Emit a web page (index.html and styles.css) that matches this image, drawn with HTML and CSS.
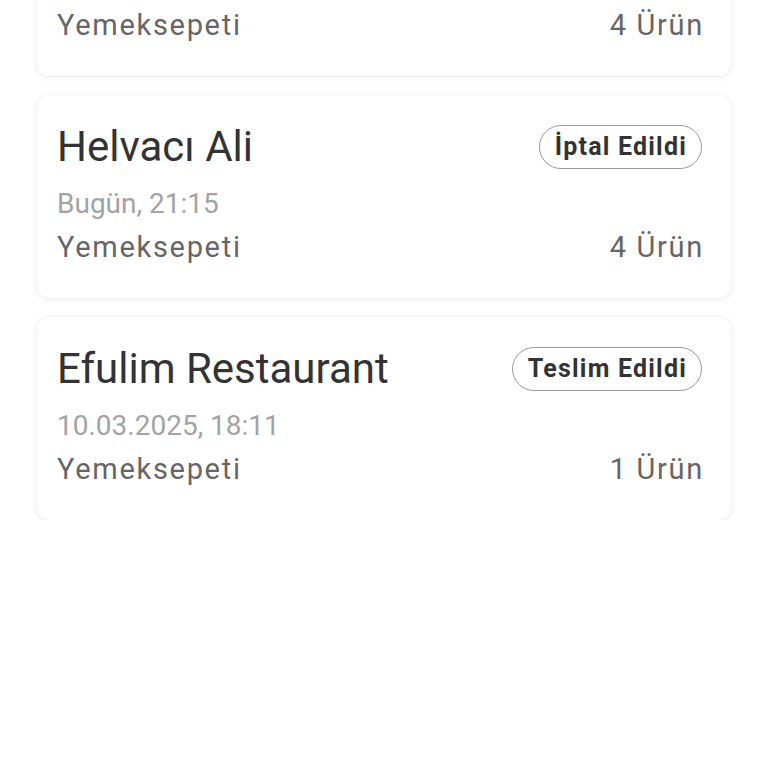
FILE: index.html
```html
<!DOCTYPE html>
<html lang="tr">
<head>
    <meta charset="UTF-8">
    <meta name="viewport" content="width=device-width, initial-scale=1.0">
    <title>Siparişlerim</title>
    <link rel="stylesheet" href="styles.css">
</head>
<body>
    <div class="order-list">
        <div class="order-card">
            <div class="order-head">
                <span class="order-name">Burger House</span>
                <span class="order-status">Teslim Edildi</span>
            </div>
            <div class="order-date">Bugün, 21:40</div>
            <div class="order-foot">
                <span>Yemeksepeti</span>
                <span>4 Ürün</span>
            </div>
        </div>

        <div class="order-card">
            <div class="order-head">
                <span class="order-name">Helvacı Ali</span>
                <span class="order-status">İptal Edildi</span>
            </div>
            <div class="order-date">Bugün, 21:15</div>
            <div class="order-foot">
                <span>Yemeksepeti</span>
                <span>4 Ürün</span>
            </div>
        </div>

        <div class="order-card">
            <div class="order-head">
                <span class="order-name">Efulim Restaurant</span>
                <span class="order-status">Teslim Edildi</span>
            </div>
            <div class="order-date">10.03.2025, 18:11</div>
            <div class="order-foot">
                <span>Yemeksepeti</span>
                <span>1 Ürün</span>
            </div>
        </div>
    </div>
</body>
</html>
```

FILE: styles.css
```css
body {
    margin: 0;
    background: #fff;
    font-family: Roboto, "Noto Sans", sans-serif;
    overflow: hidden;
}
.order-list {
    display: flex;
    flex-direction: column;
    gap: 19px;
    padding: 0 37px;
    margin-top: -127px;
}
.order-card {
    background: #fff;
    border-radius: 12px;
    padding: 30px 29px 34px 20px;
    box-shadow: 0 0 2px rgba(0, 0, 0, 0.06), 0 1px 7px rgba(0, 0, 0, 0.08);
}
.order-head {
    display: flex;
    justify-content: space-between;
    align-items: center;
    height: 44px;
}
.order-name {
    font-size: 42px;
    line-height: 44px;
    color: #333;
}
.order-status {
    box-sizing: border-box;
    height: 44px;
    line-height: 41px;
    padding: 0 14px 0 15px;
    border: 1.5px solid #9a9a9a;
    border-radius: 22px;
    font-size: 25px;
    font-weight: bold;
    letter-spacing: 1.2px;
    color: #333;
}
.order-date {
    margin-top: 19px;
    font-size: 28px;
    line-height: 32px;
    color: #a3a3a3;
}
.order-foot {
    display: flex;
    justify-content: space-between;
    margin: 10px -2px 0 0;
    font-size: 29px;
    line-height: 34px;
    letter-spacing: 1.7px;
    color: #666;
}
```
